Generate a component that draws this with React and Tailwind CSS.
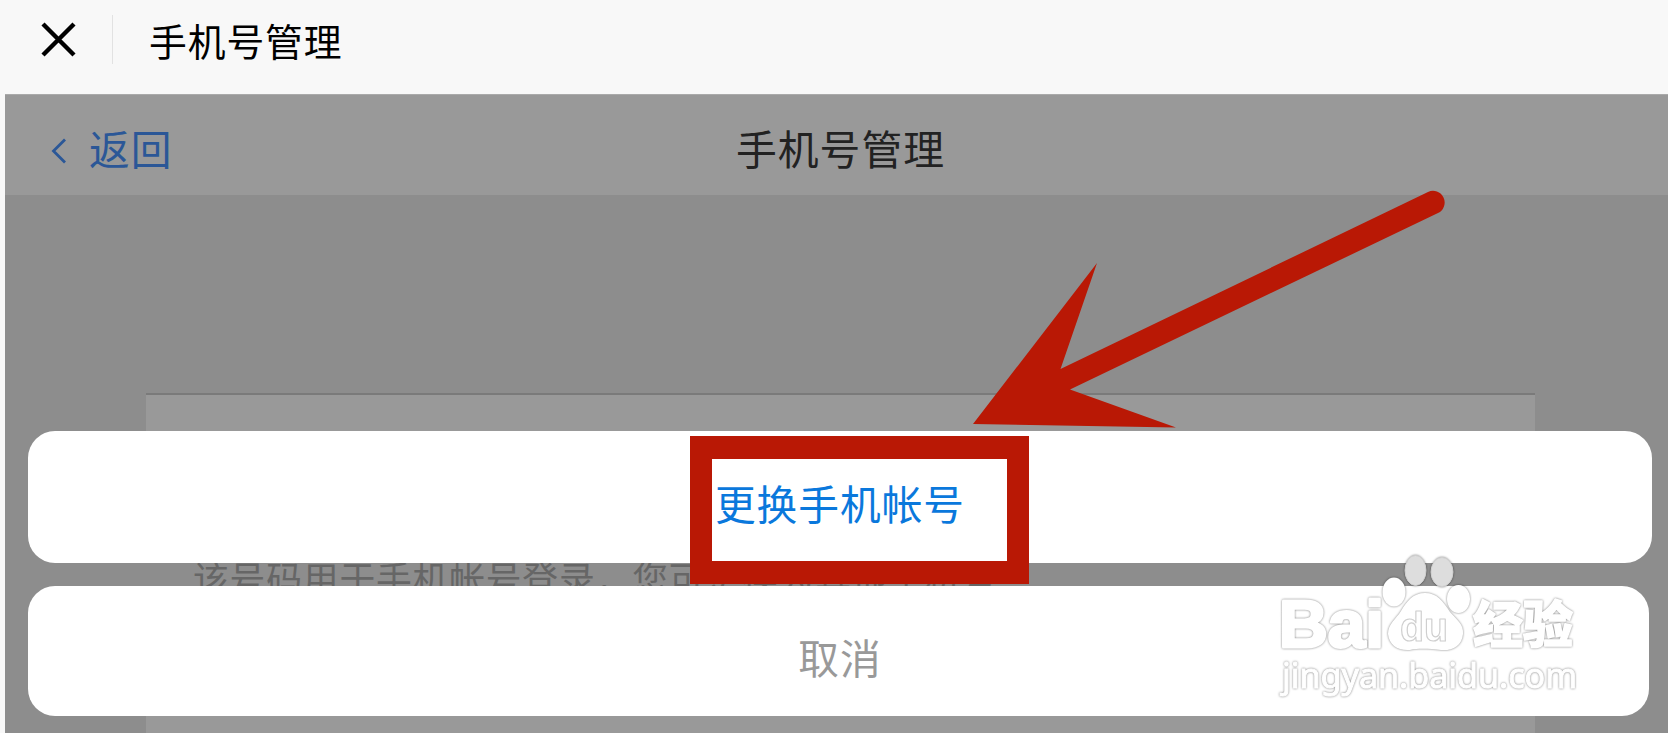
import React from 'react';

const TopBar = () => (
  <header className="flex h-[94px] items-center bg-[#f8f8f8] pb-[10px]">
    <svg className="ml-[41px] mt-[-6px] h-[36px] w-[36px]" viewBox="0 0 36 36" fill="none" stroke="#000" strokeWidth="4.4">
      <path d="M2 3 L33 34 M33 3 L2 34" />
    </svg>
    <span className="ml-[35px] mt-[-6px] h-[49px] w-px bg-[#e2e2e2]" />
    <h1 className="ml-[36px] mt-[-5px] text-[37.8px] leading-[56px] font-normal tracking-[0.9px] text-black">手机号管理</h1>
  </header>
);

const NavBar = () => (
  <nav className="grid h-[101px] grid-cols-3 items-center border-t border-[#aaa] bg-[#999] pt-[5px]">
    <a className="flex items-center text-[#2b5797]">
      <svg className="ml-[45px] mt-[6px] h-[26px] w-[18px]" viewBox="0 0 18 26" fill="none" stroke="currentColor" strokeWidth="2.8">
        <path d="M15 1.500 L3.500 13 L15 24.500" />
      </svg>
      <span className="ml-[21px] text-[40.7px] leading-[60px] tracking-[1px]">返回</span>
    </a>
    <span className="pl-[8px] text-center text-[40.8px] leading-[60px] tracking-[1px] text-[#222]">手机号管理</span>
  </nav>
);

const ActionSheet = () => (
  <div className="absolute inset-x-0 top-[431px] flex flex-col gap-[23px] pl-[28px]">
    <button className="h-[132px] w-[1624px] rounded-[27px] bg-white pt-[12px] text-[40.7px] leading-[60px] tracking-[1px] text-[#0a78dc]">
      更换手机帐号
    </button>
    <button className="h-[130px] w-[1621px] rounded-[27px] bg-white pt-[12px] pl-[3px] text-[40.7px] leading-[60px] tracking-[1px] text-[#999]">
      取消
    </button>
  </div>
);

const Watermark = () => (
  <svg
    className="absolute left-[1270px] top-[545px] drop-shadow-[0_0_1.2px_rgba(0,0,0,0.5)]"
    width="320"
    height="160"
    viewBox="1270 545 320 160"
    fill="#fff"
    stroke="#fff"
    strokeLinejoin="round"
  >
    <text x="1279" y="646.500" strokeWidth="3" fontFamily="Liberation Sans" fontWeight="700" fontSize="66" textLength="105" lengthAdjust="spacingAndGlyphs">Bai</text>
    <g fill="#ddd" stroke="#d0d0d0" strokeWidth="1">
      <ellipse cx="1415.500" cy="570.500" rx="10.500" ry="15" />
      <ellipse cx="1442" cy="572" rx="11" ry="14.500" />
    </g>
    {/* lower toes sit mostly on the white sheet */}
    <g stroke="none">
      <ellipse cx="1394" cy="592" rx="11.500" ry="14.500" />
      <ellipse cx="1458.500" cy="599" rx="11.500" ry="14" />
    </g>
    <path
      stroke="none"
      d="M1425 593 C1437 593 1443 601 1450 612 C1456 619 1464 624 1463 634 C1462 646 1452 651 1441 650 C1431 649 1419 648 1410 650 C1398 651 1389 645 1388 634 C1388 624 1396 619 1401 611 C1407 601 1413 593 1425 593 Z"
    />
    <text x="1400" y="641" stroke="#cfcfcf" strokeWidth="1.2" fontFamily="Liberation Sans" fontWeight="700" fontSize="41" textLength="48" lengthAdjust="spacingAndGlyphs">du</text>
    <text x="1473" y="643" strokeWidth="1.500" fontFamily="Noto Sans CJK SC" fontWeight="900" fontSize="50">经验</text>
    <text x="1282" y="687.500" strokeWidth="1" fontFamily="Noto Sans" fontSize="35" textLength="295" lengthAdjust="spacingAndGlyphs">jingyan.baidu.com</text>
  </svg>
);

const App = () => {
  return (
    <div className="relative h-[733px] w-[1668px] overflow-hidden bg-[#f8f8f8] font-['Noto_Sans_CJK_SC',sans-serif]">
      <TopBar />
      <main className="ml-[5px] h-[639px] bg-[#8d8d8d]">
        <NavBar />
        <section className="ml-[141px] mt-[198px] w-[1389px]">
          <div className="h-[154px] border-t-2 border-[#7a7a7a] bg-[#999]" />
          <p className="ml-[47px] h-[153px] whitespace-nowrap pt-[3px] text-[35.8px] leading-[54px] tracking-[0.8px] text-[#666]">
            该号码用于手机帐号登录，您可更换为其他手机号
          </p>
          <div className="h-[60px] bg-[#999]" />
        </section>
      </main>
      <ActionSheet />

      {/* highlight around the first action */}
      <div className="absolute left-[690px] top-[436px] h-[148px] w-[339px] border-x-[22px] border-y-[23px] border-[#b91805]" />
      <svg className="absolute left-0 top-0" width="1668" height="733" fill="#b91805">
        <path d="M973 424 L1097 263 L1060.500 369 L1428 192 A11.500 11.500 0 0 1 1438 213 L1070 389.500 L1176 427.500 Z" />
      </svg>
      <Watermark />
    </div>
  );
};

export default App;
